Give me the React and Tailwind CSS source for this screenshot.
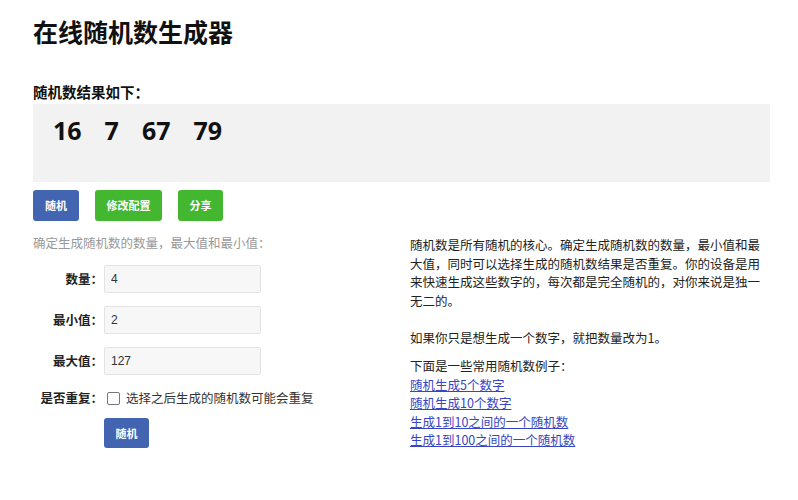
import React, { useState } from 'react'

const cjk = { fontFamily: '"Noto Sans CJK SC", "Noto Sans", sans-serif' }

function Field({ label, value }) {
    return (
        <div className='flex items-center h-[28px] mb-[13px]'>
            <label className='w-[71px] text-right pr-[1px] text-[12.5px] font-bold text-[#222] whitespace-nowrap'>{label}</label>
            <input
                defaultValue={value}
                className='w-[157px] h-[28px] px-[6px] text-[12px] text-[#333] bg-[#f7f7f7] border border-[#e3e3e3] rounded-[2px] outline-none'
                style={{ fontFamily: '"Liberation Sans", "Noto Sans CJK SC", sans-serif' }}
            />
        </div>
    )
}

export default function App() {
    const [nums] = useState([16, 7, 67, 79]);
    const [repeat, setRepeat] = useState(false);

    return (
        <div className='w-[798px] h-[500px] bg-white text-[#222] overflow-hidden' style={cjk}>
            <div className='ml-[33px] w-[737px]'>
                <h1 className='pt-[15px] text-[25px] leading-[32px] font-bold text-[#111]'>在线随机数生成器</h1>

                <div className='mt-[35px] text-[14.5px] leading-[20px] font-bold text-[#111]'>随机数结果如下：</div>
                <div className='mt-[2px] h-[78px] bg-[#f2f2f2] pl-[20px] pt-[9px]'>
                    <div
                        className='flex gap-[23px] text-[25px] leading-[34px] font-bold text-[#111]'
                        style={{ fontFamily: '"Noto Sans", sans-serif' }}
                    >
                        {nums.map((n, i) => <span key={i}>{n}</span>)}
                    </div>
                </div>

                <div className='mt-[8px] flex gap-[16px]'>
                    <button className='h-[31px] w-[46px] rounded-[3px] bg-[#4364b1] text-white text-[11px] font-bold'>随机</button>
                    <button className='h-[31px] w-[67px] rounded-[3px] bg-[#43b72f] text-white text-[11px] font-bold'>修改配置</button>
                    <button className='h-[31px] w-[45px] rounded-[3px] bg-[#43b72f] text-white text-[11px] font-bold'>分享</button>
                </div>

                <div className='mt-[13px] grid grid-cols-[377px_360px]'>
                    <div>
                        <p className='text-[12.5px] leading-[18px] text-[#999]'>确定生成随机数的数量，最大值和最小值：</p>
                        <div className='mt-[13px]'>
                            <Field label='数量：' value='4' />
                            <Field label='最小值：' value='2' />
                            <Field label='最大值：' value='127' />
                            <div className='flex items-center h-[20px] mt-[3px]'>
                                <label className='w-[71px] text-right pr-[1px] text-[12.5px] font-bold text-[#222] whitespace-nowrap'>是否重复：</label>
                                <label className='flex items-center gap-[6px] text-[12.5px] text-[#333] ml-[3px]'>
                                    <input
                                        type='checkbox'
                                        checked={repeat}
                                        onChange={(e) => setRepeat(e.target.checked)}
                                        className='appearance-none w-[13px] h-[13px] border border-[#767676] rounded-[2px] bg-white'
                                    />
                                    选择之后生成的随机数可能会重复
                                </label>
                            </div>
                            <button className='mt-[10px] ml-[71px] h-[30px] w-[45px] rounded-[3px] bg-[#4364b1] text-white text-[11px] font-bold'>随机</button>
                        </div>
                    </div>

                    <div className='text-[12.5px] leading-[18.5px] text-[#222] pt-[2px]'>
                        <p>随机数是所有随机的核心。确定生成随机数的数量，最小值和最大值，同时可以选择生成的随机数结果是否重复。你的设备是用来快速生成这些数字的，每次都是完全随机的，对你来说是独一无二的。</p>
                        <p className='mt-[18.5px]'>如果你只是想生成一个数字，就把数量改为1。</p>
                        <p className='mt-[10px]'>下面是一些常用随机数例子：</p>
                        <ul>
                            <li><a href='#' className='text-[#3745c4] underline'>随机生成5个数字</a></li>
                            <li><a href='#' className='text-[#3745c4] underline'>随机生成10个数字</a></li>
                            <li><a href='#' className='text-[#3745c4] underline'>生成1到10之间的一个随机数</a></li>
                            <li><a href='#' className='text-[#3745c4] underline'>生成1到100之间的一个随机数</a></li>
                        </ul>
                    </div>
                </div>
            </div>
        </div>
    )
}
